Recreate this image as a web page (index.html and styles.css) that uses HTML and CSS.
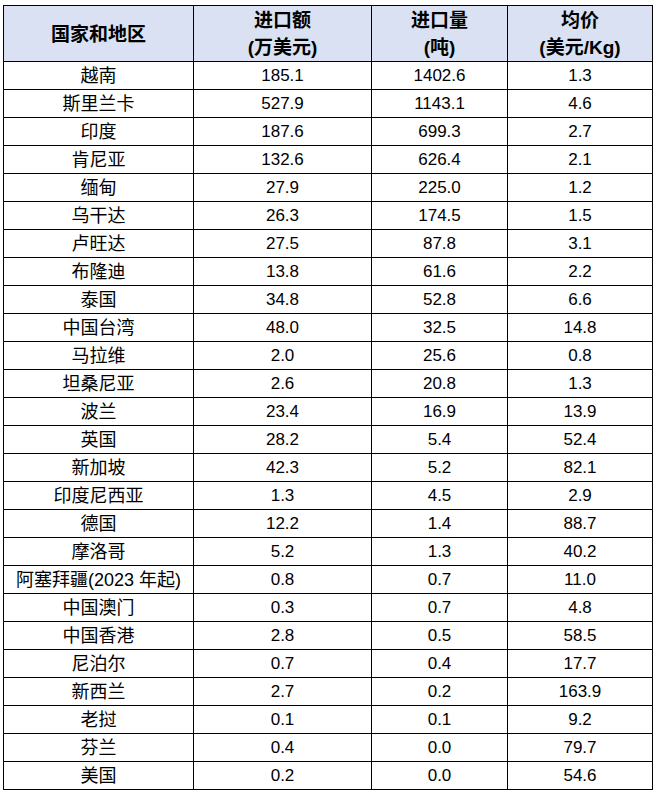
FILE: index.html
```html
<!DOCTYPE html>
<html>
<head>
<meta charset="utf-8">
<link rel="stylesheet" href="styles.css">
</head>
<body>
<table class="data">
<colgroup><col class="c1"><col class="c2"><col class="c3"><col class="c4"></colgroup>
<thead>
<tr><th>国家和地区</th><th>进口额<br>(万美元)</th><th>进口量<br>(吨)</th><th>均价<br>(美元/Kg)</th></tr>
</thead>
<tbody>
<tr><td>越南</td><td>185.1</td><td>1402.6</td><td>1.3</td></tr>
<tr><td>斯里兰卡</td><td>527.9</td><td>1143.1</td><td>4.6</td></tr>
<tr><td>印度</td><td>187.6</td><td>699.3</td><td>2.7</td></tr>
<tr><td>肯尼亚</td><td>132.6</td><td>626.4</td><td>2.1</td></tr>
<tr><td>缅甸</td><td>27.9</td><td>225.0</td><td>1.2</td></tr>
<tr><td>乌干达</td><td>26.3</td><td>174.5</td><td>1.5</td></tr>
<tr><td>卢旺达</td><td>27.5</td><td>87.8</td><td>3.1</td></tr>
<tr><td>布隆迪</td><td>13.8</td><td>61.6</td><td>2.2</td></tr>
<tr><td>泰国</td><td>34.8</td><td>52.8</td><td>6.6</td></tr>
<tr><td>中国台湾</td><td>48.0</td><td>32.5</td><td>14.8</td></tr>
<tr><td>马拉维</td><td>2.0</td><td>25.6</td><td>0.8</td></tr>
<tr><td>坦桑尼亚</td><td>2.6</td><td>20.8</td><td>1.3</td></tr>
<tr><td>波兰</td><td>23.4</td><td>16.9</td><td>13.9</td></tr>
<tr><td>英国</td><td>28.2</td><td>5.4</td><td>52.4</td></tr>
<tr><td>新加坡</td><td>42.3</td><td>5.2</td><td>82.1</td></tr>
<tr><td>印度尼西亚</td><td>1.3</td><td>4.5</td><td>2.9</td></tr>
<tr><td>德国</td><td>12.2</td><td>1.4</td><td>88.7</td></tr>
<tr><td>摩洛哥</td><td>5.2</td><td>1.3</td><td>40.2</td></tr>
<tr><td>阿塞拜疆(2023 年起)</td><td>0.8</td><td>0.7</td><td>11.0</td></tr>
<tr><td>中国澳门</td><td>0.3</td><td>0.7</td><td>4.8</td></tr>
<tr><td>中国香港</td><td>2.8</td><td>0.5</td><td>58.5</td></tr>
<tr><td>尼泊尔</td><td>0.7</td><td>0.4</td><td>17.7</td></tr>
<tr><td>新西兰</td><td>2.7</td><td>0.2</td><td>163.9</td></tr>
<tr><td>老挝</td><td>0.1</td><td>0.1</td><td>9.2</td></tr>
<tr><td>芬兰</td><td>0.4</td><td>0.0</td><td>79.7</td></tr>
<tr><td>美国</td><td>0.2</td><td>0.0</td><td>54.6</td></tr>
</tbody>
</table>
</body>
</html>
```
FILE: styles.css
```css
html, body {
  margin: 0;
  padding: 0;
  background: #ffffff;
}
body {
  padding: 5px 0 0 3px;
  font-family: "Liberation Sans", "Noto Sans CJK SC", sans-serif;
  color: #000;
}
.data {
  border-collapse: collapse;
  table-layout: fixed;
  width: 649px;
}
.c1 { width: 190px; }
.c2 { width: 178px; }
.c3 { width: 136px; }
.c4 { width: 145px; }
.data th, .data td {
  border: 1px solid #000;
  text-align: center;
  padding: 0;
  white-space: nowrap;
  box-sizing: border-box;
}
.data th {
  background: #d9e1f2;
  font-weight: bold;
  font-size: 19px;
  line-height: 27px;
  height: 54px;
  padding-top: 1px;
}
.data td {
  font-size: 17px;
  line-height: 18px;
  height: 28px;
  padding-top: 1px;
}
.data td:first-child {
  font-size: 18px;
}
```
